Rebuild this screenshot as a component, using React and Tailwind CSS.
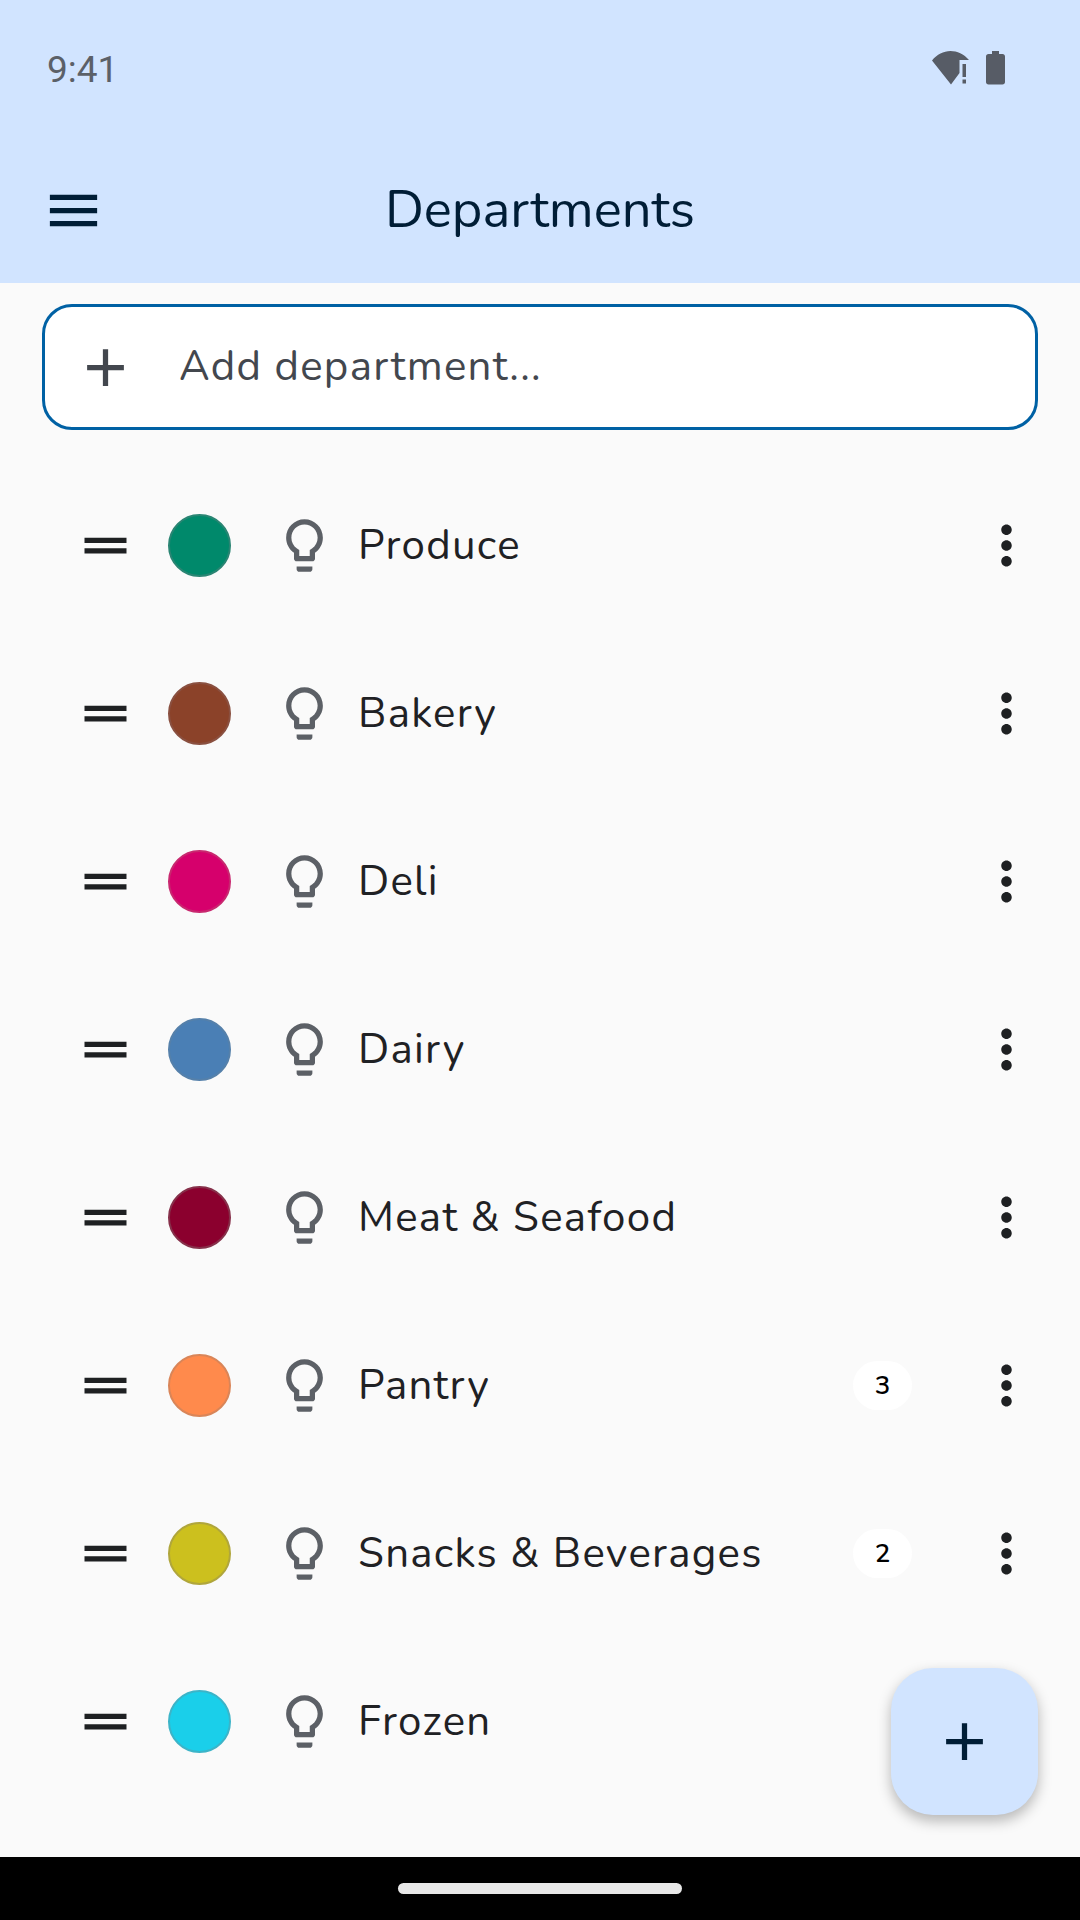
import React from "react";

const departments = [
  { name: "Produce", color: "bg-[#00896b]", ring: "border-[#2a8573]" },
  { name: "Bakery", color: "bg-[#8b4229]", ring: "border-[#8a5040]" },
  { name: "Deli", color: "bg-[#d6006c]", ring: "border-[#c8286f]" },
  { name: "Dairy", color: "bg-[#4a7fb5]", ring: "border-[#5580aa]" },
  { name: "Meat & Seafood", color: "bg-[#8b002e]", ring: "border-[#86304a]" },
  { name: "Pantry", count: 3, color: "bg-[#ff8a4c]", ring: "border-[#d98558]" },
  { name: "Snacks & Beverages", count: 2, color: "bg-[#ccc01e]", ring: "border-[#b0a63c]" },
  { name: "Frozen", color: "bg-[#1acfea]", ring: "border-[#3cb4c8]" },
];

const DragHandle = () => (
  <svg viewBox="0 0 24 24" className="w-[63px] h-[63px] shrink-0 fill-[#1e2022]">
    <path d="M20 9H4v2h16V9zM4 15h16v-2H4v2z" />
  </svg>
);

const Bulb = () => (
  <svg viewBox="0 0 24 24" className="w-[63px] h-[63px] shrink-0 ml-[42px] fill-[#5c6066]">
    <path d="M9 21c0 .55.45 1 1 1h4c.55 0 1-.45 1-1v-1H9v1zm3-19C8.14 2 5 5.14 5 9c0 2.38 1.19 4.47 3 5.74V17c0 .55.45 1 1 1h6c.55 0 1-.45 1-1v-2.26c1.81-1.27 3-3.36 3-5.74 0-3.86-3.14-7-7-7zm2.85 11.1l-.85.6V16h-4v-2.3l-.85-.6C7.8 12.16 7 10.63 7 9c0-2.76 2.24-5 5-5s5 2.24 5 5c0 1.63-.8 3.16-2.15 4.1z" />
  </svg>
);

const MoreVert = () => (
  <svg viewBox="0 0 24 24" className="w-[63px] h-[63px] shrink-0 fill-[#1e2022]">
    <path d="M12 8c1.1 0 2-.9 2-2s-.9-2-2-2-2 .9-2 2 .9 2 2 2zm0 2c-1.1 0-2 .9-2 2s.9 2 2 2 2-.9 2-2-.9-2-2-2zm0 6c-1.1 0-2 .9-2 2s.9 2 2 2 2-.9 2-2-.9-2-2-2z" />
  </svg>
);

const PlusIcon = ({ className }) => (
  <svg viewBox="0 0 24 24" className={className}>
    <path d="M19 13h-6v6h-2v-6H5v-2h6V5h2v6h6v2z" />
  </svg>
);

const MenuIcon = () => (
  <svg viewBox="0 0 24 24" className="absolute left-[42px] top-[41px] w-[63px] h-[63px] fill-[#001d36]">
    <path d="M3 18h18v-2H3v2zm0-5h18v-2H3v2zm0-7v2h18V6H3z" />
  </svg>
);

const StatusIcons = () => (
  <svg viewBox="0 0 76 34" className="w-[76px] h-[34px] fill-[#575c66]">
    <path d="M0 9.500C5 3.500 11.500 0 18.500 0C25 0 32 3 37 9L27.500 9L27.500 22L19 33.500Z" />
    <rect x="30.500" y="13" width="3.500" height="13" />
    <rect x="30.500" y="28.500" width="3.500" height="4" />
    <path d="M60 0h7v3h3.500c1.500 0 2.500 1 2.500 2.500V31c0 1.500-1 2.500-2.500 2.500h-14c-1.500 0-2.500-1-2.500-2.500V5.500C54 4 55 3 56.500 3H60z" />
  </svg>
);

const Row = ({ name, color, ring, count }) => (
  <div className="h-[168px] shrink-0 flex items-center pl-[74px] pr-[42px]">
    <DragHandle />
    <div className={`w-[63px] h-[63px] ml-[31px] shrink-0 rounded-full border-2 ${color} ${ring}`}></div>
    <Bulb />
    <span className="ml-[22px] pt-[2px] flex-1 text-[42px] leading-[56px] tracking-[1.3px] text-[#1f2124]">{name}</span>
    {count ? (
      <span className="w-[59px] h-[49px] mr-[63px] rounded-full bg-white flex items-center justify-center text-[26px] font-semibold text-black">{count}</span>
    ) : null}
    <MoreVert />
  </div>
);

export default function App() {
  return (
    <div className="relative w-[1080px] h-[1920px] overflow-hidden flex flex-col bg-[#fafafa] font-['Nunito','Noto_Sans',sans-serif]">
      <header className="h-[283px] shrink-0 bg-[#d1e4ff] flex flex-col">
        <div className="h-[138px] flex items-start justify-between pl-[47px] pr-[72px] pt-[51px]">
          <span className="font-['Roboto',sans-serif] text-[37px] leading-[38px] text-[#5b6068]">9:41</span>
          <StatusIcons />
        </div>
        <div className="relative flex-1 flex items-start justify-center pt-[37px]">
          <span className="text-[52.5px] leading-[70px] text-[#001d36]">Departments</span>
          <MenuIcon />
        </div>
      </header>

      <div className="mt-[21px] mx-[42px] h-[126px] shrink-0 rounded-[30px] border-[3px] border-[#0061a4] bg-white flex items-center pl-[29px]">
        <PlusIcon className="w-[63px] h-[63px] fill-[#43474e] shrink-0" />
        <span className="ml-[42px] pb-[2px] text-[42px] tracking-[1.3px] text-[#43474e]">Add department...</span>
      </div>

      <div className="mt-[31px] flex-1 min-h-0 flex flex-col">
        {departments.map((d) => (
          <Row key={d.name} {...d} />
        ))}
      </div>

      <button className="absolute left-[891px] top-[1668px] w-[147px] h-[147px] rounded-[42px] bg-[#d1e4ff] shadow-[0_6px_14px_rgba(0,0,0,0.28)] flex items-center justify-center">
        <PlusIcon className="w-[63px] h-[63px] fill-[#001d36]" />
      </button>

      <div className="absolute left-0 bottom-0 w-full h-[63px] bg-black flex items-center justify-center">
        <div className="w-[284px] h-[11px] rounded-full bg-[#e8e8e8]"></div>
      </div>
    </div>
  );
}
